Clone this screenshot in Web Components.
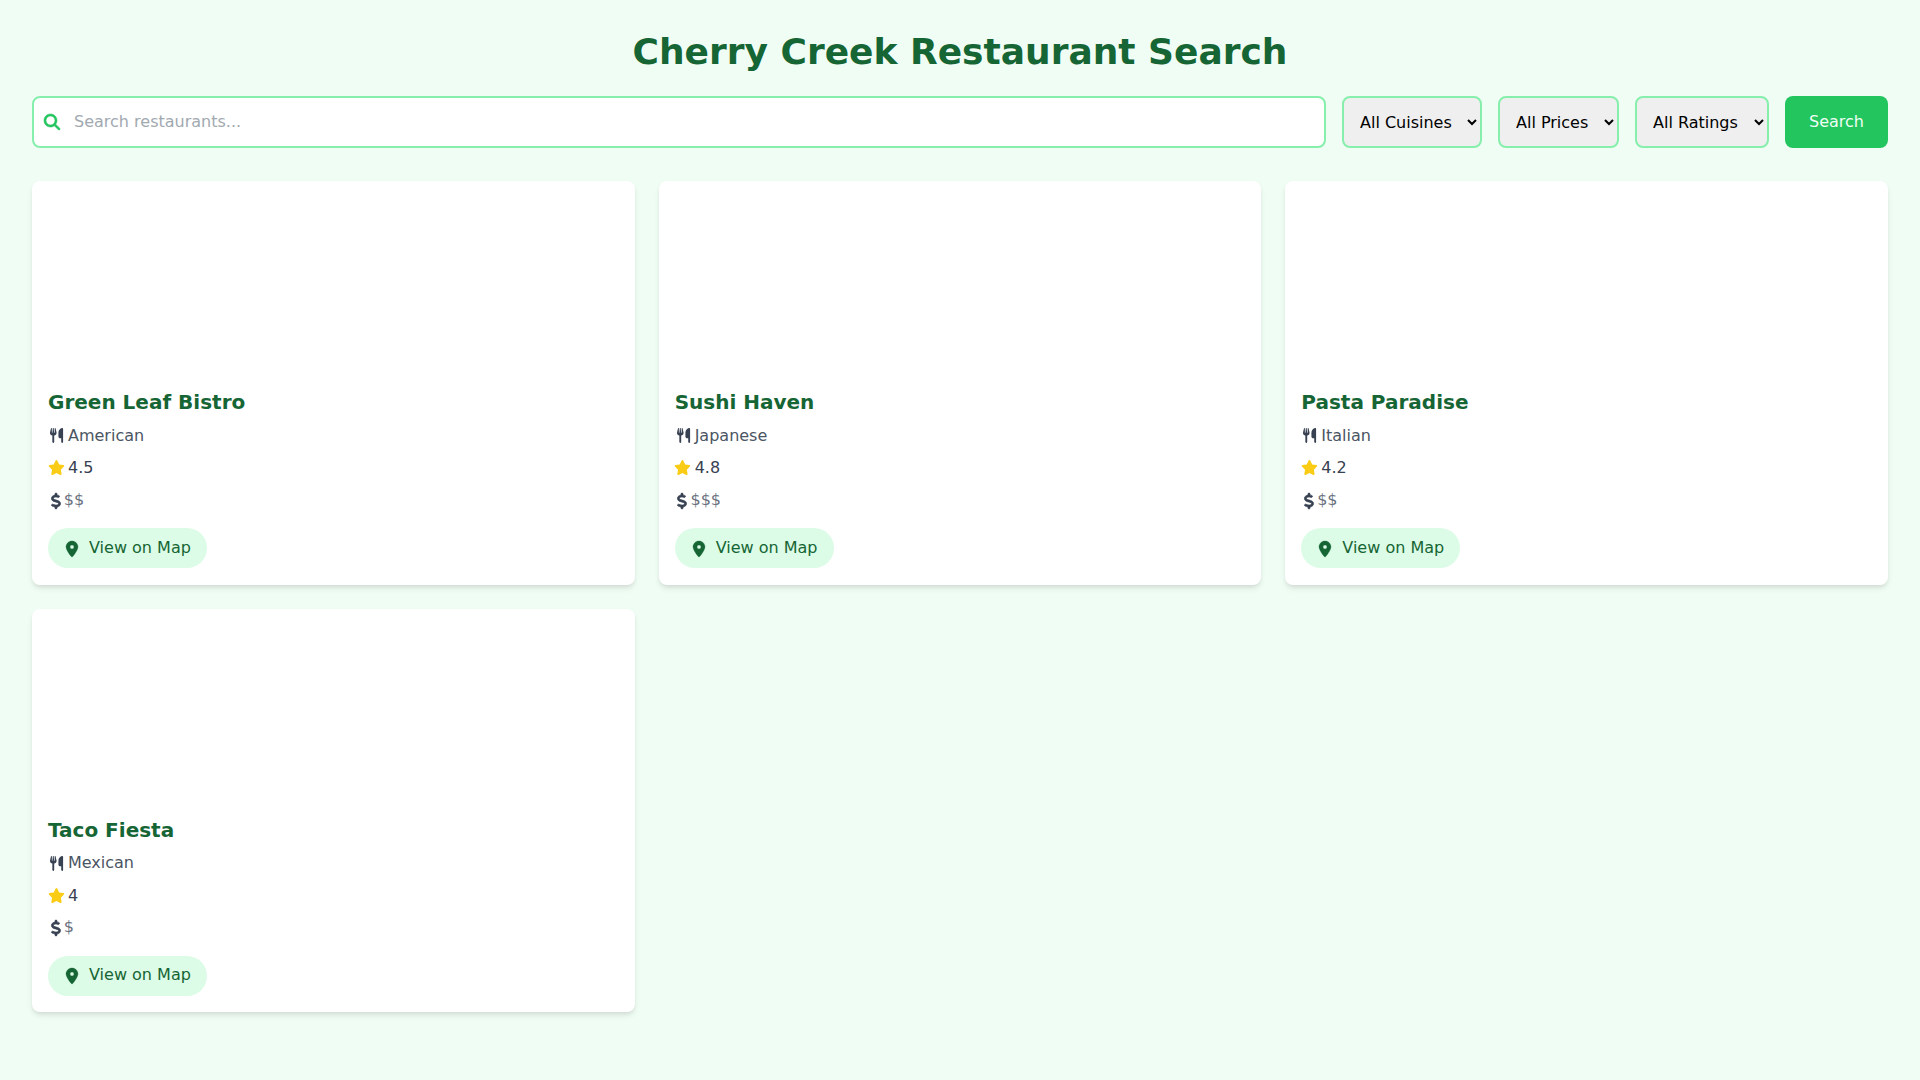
<!DOCTYPE html>
<html lang="en"><head><meta charset="utf-8"><title>Cherry Creek Restaurant Search</title>
<style>
html,body{margin:0;padding:0}
body{background:#f0fdf4;font-family:"DejaVu Sans",sans-serif;min-height:1080px}
</style></head>
<body>
<restaurant-app>
  <search-bar></search-bar>
  <restaurant-card name="Green Leaf Bistro" cuisine="American" rating="4.5" price="$$"></restaurant-card>
  <restaurant-card name="Sushi Haven" cuisine="Japanese" rating="4.8" price="$$$"></restaurant-card>
  <restaurant-card name="Pasta Paradise" cuisine="Italian" rating="4.2" price="$$"></restaurant-card>
  <restaurant-card name="Taco Fiesta" cuisine="Mexican" rating="4" price="$"></restaurant-card>
</restaurant-app>
<script>
const P={
search:['0 0 512 512','M416 208c0 45.9-14.9 88.3-40 122.7L502.6 457.4c12.5 12.5 12.5 32.8 0 45.3s-32.8 12.5-45.3 0L330.7 376c-34.4 25.2-76.8 40-122.7 40C93.1 416 0 322.9 0 208S93.1 0 208 0S416 93.1 416 208zM208 352a144 144 0 1 0 0-288 144 144 0 1 0 0 288z'],
utensils:['0 0 448 512','M416 0C400 0 288 32 288 176V288c0 35.3 28.7 64 64 64h32V480c0 17.7 14.3 32 32 32s32-14.3 32-32V352 240 32c0-17.7-14.3-32-32-32zM64 16C64 7.8 57.9 1 49.7 .1S34.2 4.6 32.4 12.5L2.1 148.8C.7 155.1 0 161.5 0 167.9c0 45.9 35.1 83.6 80 87.7V480c0 17.7 14.3 32 32 32s32-14.3 32-32V255.6c44.9-4.1 80-41.8 80-87.7c0-6.4-.7-12.8-2.1-19.1L191.6 12.5c-1.8-8-9.3-13.3-17.4-12.4S160 7.8 160 16V150.2c0 5.4-4.4 9.8-9.8 9.8c-5.1 0-9.3-3.9-9.8-9L127.9 14.6C127.2 6.3 120.3 0 112 0s-15.2 6.3-15.9 14.6L83.7 151c-.5 5.1-4.7 9-9.8 9c-5.4 0-9.8-4.4-9.8-9.8V16z'],
star:['0 0 576 512','M316.9 18C311.6 7 300.4 0 288.1 0s-23.4 7-28.8 18L195 150.3 51.4 171.5c-12 1.8-22 10.2-25.7 21.7s-.7 24.2 7.9 32.7L137.8 329 113.2 474.7c-2 12 3 24.2 12.9 31.3s23 8 33.8 2.3l128.3-68.5 128.3 68.5c10.8 5.7 23.9 4.9 33.8-2.3s14.9-19.3 12.9-31.3L438.5 329 542.7 225.9c8.6-8.5 11.7-21.2 7.9-32.7s-13.7-19.9-25.7-21.7L381.2 150.3 316.9 18z'],
dollar:['0 0 320 512','M160 0c17.7 0 32 14.3 32 32V67.7c1.6 .2 3.1 .4 4.7 .7c.4 .1 .7 .1 1.1 .2l48 8.8c17.4 3.2 28.9 19.9 25.7 37.2s-19.9 28.9-37.2 25.7l-47.5-8.7c-31.3-4.6-58.9-1.5-78.3 6.2s-27.2 18.3-29 28.1c-2 10.7-.5 16.7 1.2 20.4c1.8 3.9 5.5 8.3 12.8 13.2c16.3 10.7 41.3 17.7 73.7 26.3l2.9 .8c28.6 7.6 63.6 16.8 89.6 33.8c14.2 9.3 27.6 21.9 35.9 39.5c8.5 17.9 10.3 37.9 6.4 59.2c-6.9 38-33.1 63.4-65.6 76.7c-13.7 5.6-28.6 9.2-44.4 11V480c0 17.7-14.3 32-32 32s-32-14.3-32-32V445.1c-.4-.1-.9-.1-1.3-.2l-.2 0 0 0c-24.4-3.8-64.5-14.3-91.5-26.3c-16.1-7.2-23.4-26.1-16.2-42.2s26.1-23.4 42.2-16.2c20.9 9.3 55.3 18.5 75.2 21.6c31.9 4.7 58.2 2 76-5.3c16.9-6.9 24.6-16.9 26.8-28.9c1.9-10.6 .4-16.7-1.3-20.4c-1.9-4-5.6-8.4-13-13.3c-16.4-10.7-41.5-17.7-74-26.3l-2.8-.7 0 0C119.4 279.3 84.4 270 58.4 253c-14.2-9.3-27.5-22-35.8-39.6c-8.4-17.9-10.1-37.9-6.1-59.2C23.7 116 52.3 91.2 84.8 78.3c13.3-5.3 27.9-8.9 43.2-11V32c0-17.7 14.3-32 32-32z'],
marker:['0 0 384 512','M215.7 499.2C267 435 384 279.4 384 192C384 86 298 0 192 0S0 86 0 192c0 87.4 117 243 168.3 307.2c12.3 15.3 35.1 15.3 47.4 0zM192 128a64 64 0 1 1 0 128 64 64 0 1 1 0-128z']
};
const svg=(n,c,sw)=>`<svg class="${c}" viewBox="${P[n][0]}" aria-hidden="true"><path fill="currentColor" stroke="currentColor" stroke-width="${sw||0}" d="${P[n][1]}"/></svg>`;

class RestaurantApp extends HTMLElement{
  constructor(){super();this.attachShadow({mode:'open'}).innerHTML=`<style>
  :host{display:block;padding:32px}
  h1{margin:0 0 24px;font-size:36px;line-height:40px;font-weight:700;color:#166534;text-align:center}
  .grid{display:grid;grid-template-columns:repeat(3,1fr);gap:24px}
  ::slotted(search-bar){margin-bottom:33px}
  </style><h1>Cherry Creek Restaurant Search</h1><slot name="bar"></slot><div class="grid"><slot></slot></div>`;
  this.querySelector('search-bar').slot='bar';}
}
class SearchBar extends HTMLElement{
  constructor(){super();this.attachShadow({mode:'open'}).innerHTML=`<style>
  :host{display:flex;gap:16px;align-items:stretch;height:52px}
  .box{flex:1;position:relative;display:flex}
  input{flex:1;min-width:0;box-sizing:border-box;border:2px solid #86efac;border-radius:8px;padding:0 16px 1px 40px;font:16px "DejaVu Sans",sans-serif;background:#fff;outline:none;color:#111}
  input::placeholder{color:#a1a9b0}
  .ico{position:absolute;left:12px;top:18px;width:16px;height:16px;color:#22c55e;overflow:visible}
  select{box-sizing:border-box;border:2px solid #86efac;border-radius:8px;padding:0 0 0 12px;font:16px "DejaVu Sans",sans-serif;color:#000;background-color:#efefef;outline:none}
  .c{width:140px}.p{width:121px}.r{width:134px}
  button{width:103px;border:0;border-radius:8px;background:#22c55e;color:#f0fdf4;font:16px "DejaVu Sans",sans-serif;padding:0 0 1px}
  </style>
  <div class="box">${svg('search','ico',18)}<input type="text" placeholder="Search restaurants..."></div>
  <select class="c" aria-label="Cuisine"><option>All Cuisines</option><option>American</option><option>Japanese</option><option>Italian</option><option>Mexican</option></select>
  <select class="p" aria-label="Price"><option>All Prices</option><option>$</option><option>$$</option><option>$$$</option></select>
  <select class="r" aria-label="Rating"><option>All Ratings</option><option>4+</option><option>4.5+</option></select>
  <button type="button">Search</button>`;}
}
class RestaurantCard extends HTMLElement{
  connectedCallback(){
    if(this.shadowRoot)return;
    const a=k=>this.getAttribute(k);
    this.attachShadow({mode:'open'}).innerHTML=`<style>
  :host{display:block;background:#fff;border-radius:8px;box-shadow:0 4px 6px -1px rgba(0,0,0,.1),0 2px 4px -1px rgba(0,0,0,.06);overflow:hidden}
  .img{height:192px}
  .body{padding:16px 16px 16.5px;display:flex;flex-direction:column;align-items:flex-start}
  h2{margin:0 0 7px;font-size:20px;line-height:27px;font-weight:700;color:#166534}
  .row{display:flex;align-items:center;height:24.5px;margin-bottom:8px;font-size:16px;color:#4b5563}
  .row svg{display:block;flex:none;color:#374151;height:15px;overflow:visible}
  .u{width:13.1px;margin:1px 4.9px 0 2px}
  .s{width:16.9px;margin:0 3.6px 0 -.5px;color:#facc15!important}
  .row .d{height:16px;width:10px;margin:1px 3px 0 2.8px}
  .rt{color:#374151}
  .pr{color:#6b7280;margin-bottom:2px}
  a{display:inline-flex;align-items:center;height:40px;box-sizing:border-box;margin-top:7.5px;padding:0 16px 2px 18px;border-radius:9999px;background:#dcfce7;color:#166534;font-size:16px;text-decoration:none}
  a svg{height:16px;width:12px;margin-right:11px;margin-top:3px;overflow:visible}
  </style>
  <div class="img"></div>
  <div class="body">
    <h2>${a('name')}</h2>
    <div class="row">${svg('utensils','u')}<span>${a('cuisine')}</span></div>
    <div class="row rt">${svg('star','s')}<span>${a('rating')}</span></div>
    <div class="row">${svg('dollar','d',24)}<span class="pr">${a('price')}</span></div>
    <a href="#">${svg('marker','',10)}<span>View on Map</span></a>
  </div>`;
  }
}
customElements.define('restaurant-app',RestaurantApp);
customElements.define('search-bar',SearchBar);
customElements.define('restaurant-card',RestaurantCard);
</script>
</body></html>
